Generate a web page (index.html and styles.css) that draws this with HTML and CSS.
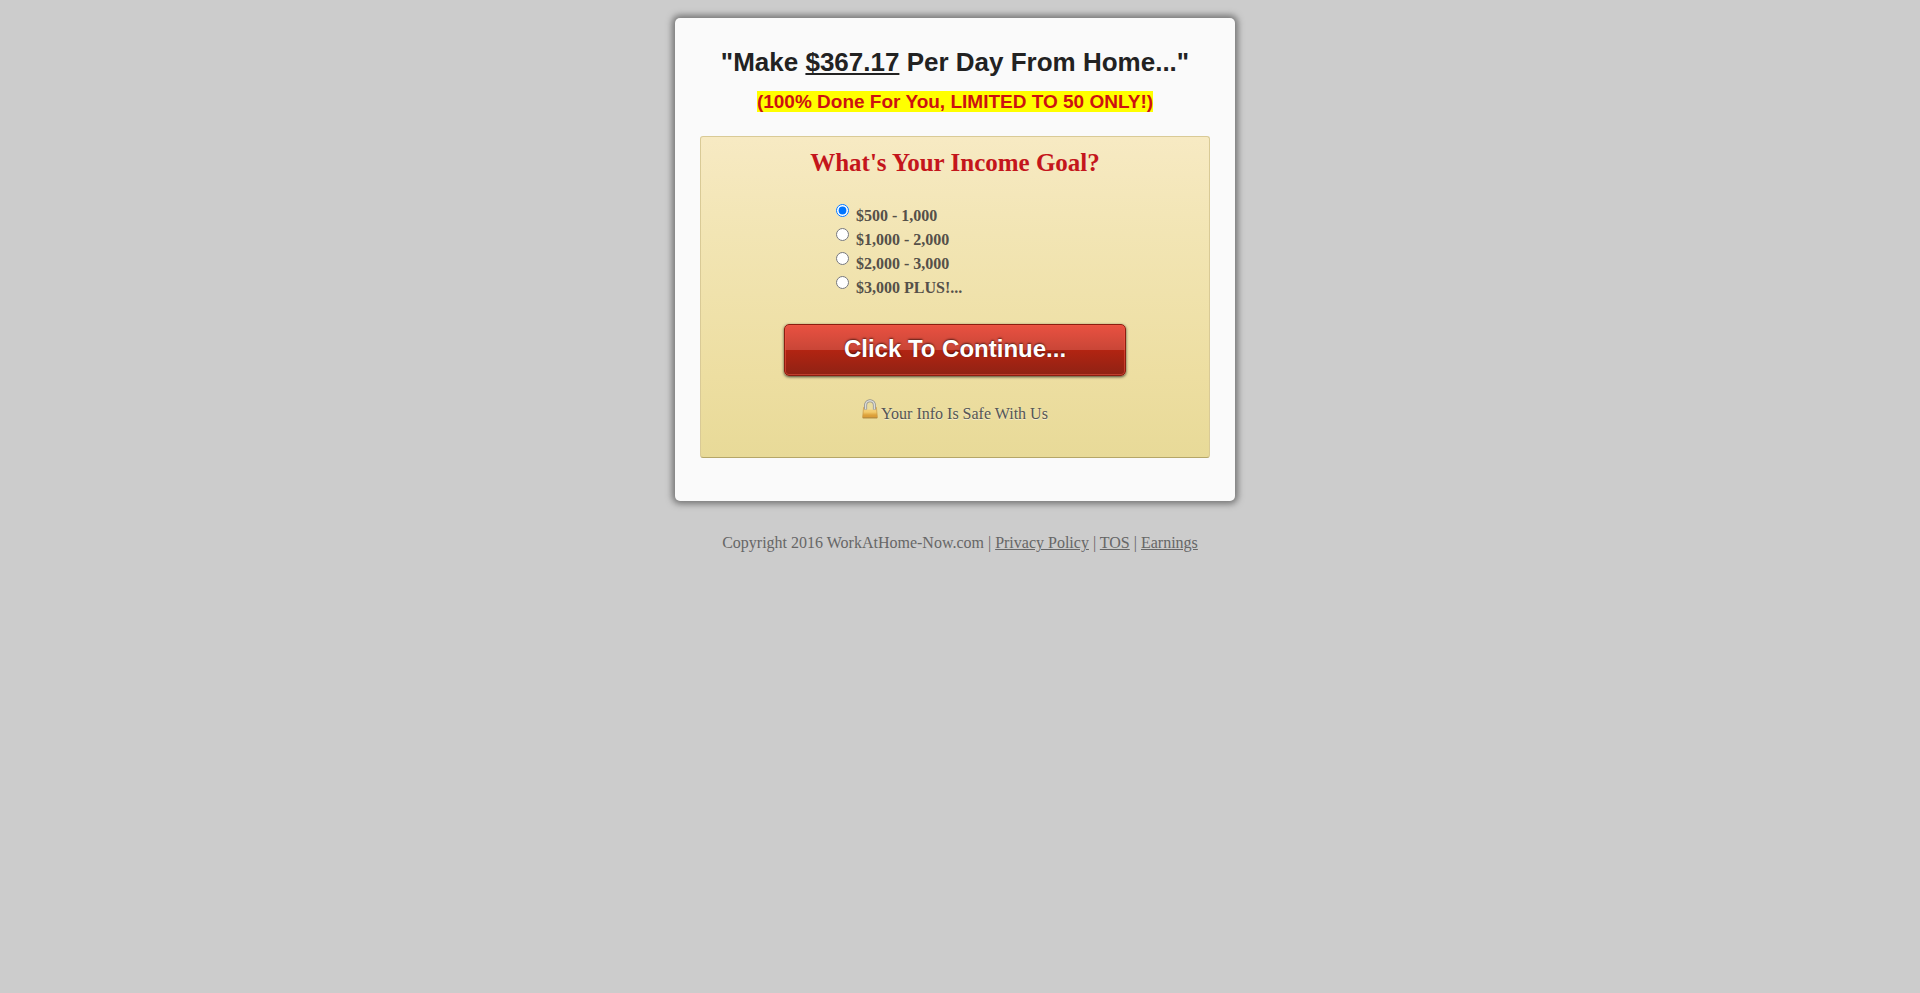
FILE: index.html
```html
<!DOCTYPE html>
<html lang="en">
<head>
    <meta charset="UTF-8">
    <meta name="viewport" content="width=device-width, initial-scale=1.0">
    <title>WorkAtHome-Now.com</title>
    <link rel="stylesheet" href="styles.css">
</head>
<body>
    <div class="wrapper">
        <main class="card">
            <h1 class="headline">"Make <u>$367.17</u> Per Day From Home..."</h1>
            <h2 class="subheadline"><mark>(100% Done For You, LIMITED TO 50 ONLY!)</mark></h2>

            <form class="optin">
                <h3 class="question" id="question">What's Your Income Goal?</h3>
                <div class="goals" role="radiogroup" aria-labelledby="question">
                    <div class="goal">
                        <input type="radio" name="goal" id="goal1" value="500" checked>
                        <label for="goal1">$500 - 1,000</label>
                    </div>
                    <div class="goal">
                        <input type="radio" name="goal" id="goal2" value="1000">
                        <label for="goal2">$1,000 - 2,000</label>
                    </div>
                    <div class="goal">
                        <input type="radio" name="goal" id="goal3" value="2000">
                        <label for="goal3">$2,000 - 3,000</label>
                    </div>
                    <div class="goal">
                        <input type="radio" name="goal" id="goal4" value="3000">
                        <label for="goal4">$3,000 PLUS!...</label>
                    </div>
                </div>
                <button type="submit" class="continue">Click To Continue...</button>
                <p class="privacy">
                    <svg class="lock" width="16" height="20" viewBox="0 0 16 20" aria-hidden="true">
                        <defs>
                            <linearGradient id="gold" x1="0" y1="0" x2="0" y2="1">
                                <stop offset="0" stop-color="#f1d083"/>
                                <stop offset="0.45" stop-color="#f3cb6c"/>
                                <stop offset="0.75" stop-color="#dda23c"/>
                                <stop offset="1" stop-color="#d99a35"/>
                            </linearGradient>
                        </defs>
                        <path d="M1.6 8.4h12.8l1 10.2H.6z" fill="url(#gold)" stroke="#cb9a45" stroke-width="0.7" stroke-linejoin="round"/>
                        <path d="M2 9.6h12" stroke="#fae9b8" stroke-width="0.8"/>
                        <path d="M3.6 10.5V6.2a4.4 4.4 0 0 1 8.8 0v4.3" fill="#ebdda0" stroke="#8f8f8c" stroke-width="3"/>
                        <path d="M3.6 10.3V6.2a4.4 4.4 0 0 1 8.8 0v4.1" fill="none" stroke="#dcdcd8" stroke-width="1.5"/>
                        <path d="M0.8 18.9h14.4" stroke="#a87a2c" stroke-width="0.9"/>
                    </svg>
                    <span>Your Info Is Safe With Us</span>
                </p>
            </form>
        </main>
    </div>

    <footer class="footer">
        Copyright 2016 WorkAtHome-Now.com | <a href="#">Privacy Policy</a> | <a href="#">TOS</a> | <a href="#">Earnings</a>
    </footer>
</body>
</html>
```
FILE: styles.css
```css
body {
    margin: 0;
    padding: 18px 0;
    background-color: #ccc;
    color: #666;
    font-family: "Liberation Serif", "Times New Roman", serif;
    font-size: 16px;
    line-height: 24px;
}

h1, h2, h3, p {
    margin: 0;
}

.wrapper {
    box-sizing: border-box;
    max-width: 570px;
    margin: 0 auto;
    padding-right: 10px;
}

.card {
    padding: 28px 25px 43px;
    background-color: #fafafa;
    border-radius: 5px;
    box-shadow: 0 0 6px 3px #777;
    text-align: center;
}

.headline {
    color: #222;
    font-family: "Liberation Sans", Arial, sans-serif;
    font-size: 26px;
    line-height: 32px;
}

.subheadline {
    margin: 12px 0 22px;
    font-family: "Liberation Sans", Arial, sans-serif;
    font-size: 19px;
    line-height: 24px;
}

.subheadline mark {
    background-color: #ff0;
    color: #c11;
}

.optin {
    padding: 10px 20px 31px;
    border: 1px solid #d9ca96;
    border-bottom-color: #b5a668;
    border-radius: 3px;
    background: linear-gradient(#f7eac3, #f2e5b4 30%, #eddea1 75%, #e8da98);
}

.question {
    color: #c4161c;
    font-size: 25px;
    line-height: 32px;
}

.goals {
    width: 238px;
    margin: 24px auto 25px;
    text-align: left;
}

.goal {
    display: flex;
    align-items: flex-start;
    gap: 7px;
    height: 24px;
    color: #555049;
    font-weight: bold;
}

.goal input {
    width: 13px;
    height: 13px;
    margin: 1px 0 0 0;
}

.goal label {
    padding-top: 1px;
}

.continue {
    display: block;
    width: 100%;
    max-width: 342px;
    height: 52px;
    margin: 0 auto;
    padding: 0 0 3px;
    border: 1px solid #8c1d10;
    border-radius: 5px;
    background: linear-gradient(#e95141, #c94637 50%, #b22412 50%, #8f2214);
    box-shadow: inset 0 0 0 1px rgba(240, 90, 70, 0.5), 0 1px 3px rgba(0, 0, 0, 0.7);
    color: #fff;
    font-family: "Liberation Sans", Arial, sans-serif;
    font-size: 24px;
    font-weight: bold;
    text-shadow: 0 -1px 2px rgba(0, 0, 0, 0.6);
    cursor: pointer;
}

.privacy {
    display: flex;
    justify-content: center;
    gap: 3px;
    margin-top: 23px;
    color: #555;
    text-shadow: 0 1px 0 rgba(255, 255, 255, 0.5);
}

.privacy span {
    padding-top: 3px;
}

.footer {
    margin-top: 30px;
    text-align: center;
}

.footer a {
    color: #666;
}
```
